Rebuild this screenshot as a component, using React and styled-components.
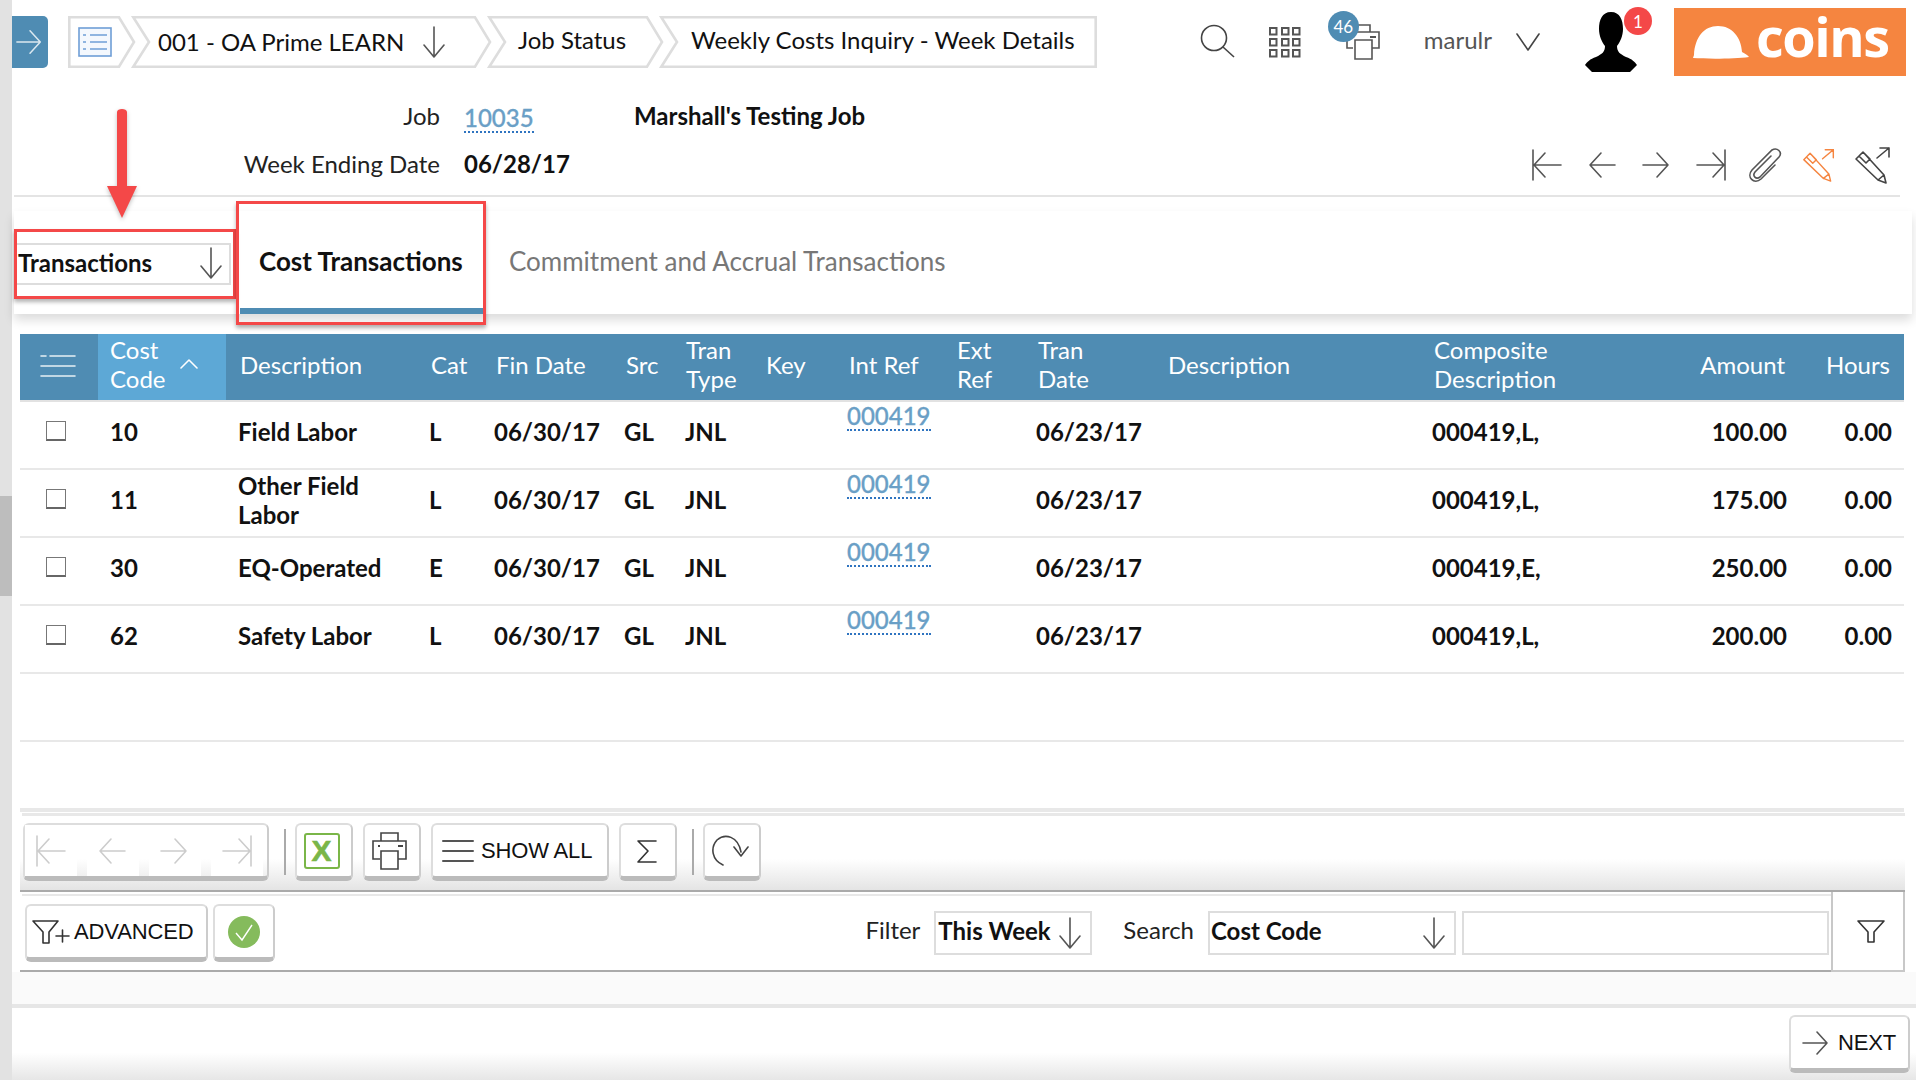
import React from "react";
import styled, { createGlobalStyle } from "styled-components";

const Global = createGlobalStyle`
  html, body { margin: 0; padding: 0; background: #fff; }
  body { font-family: Lato, "Noto Sans", sans-serif; font-size: 24px; color: #111; width: 1916px; height: 1092px; overflow: hidden; }
  * { box-sizing: border-box; }
`;

const Root = styled.div`position: relative; display: flex; width: 1916px; height: 1080px;`;
const Strip = styled.div`width: 12px; flex: none; background: #e2e2e2; padding-top: 496px;`;
const Thumb = styled.div`height: 100px; background: #bdbdbd;`;
const Main = styled.div`flex: 1; min-width: 0; display: flex; flex-direction: column;`;

/* ---------- top bar ---------- */
const TopBar = styled.header`height: 84px; flex: none; display: flex; align-items: center; padding-right: 10px;`;
const NavToggle = styled.div`width: 36px; height: 52px; background: #4f8cb3; border-radius: 0 5px 5px 0; display: flex; align-items: center; justify-content: center; margin-right: 20px;`;
const Breadcrumb = styled.nav`display: flex; height: 52px;`;
const CrumbBox = styled.div`position: relative; height: 52px; width: ${p => p.$w}px; margin-left: ${p => p.$ml || 0}px; padding-left: ${p => p.$pl}px; display: flex; align-items: center; color: #111; white-space: nowrap;`;
const CrumbShape = styled.svg`position: absolute; left: 0; top: 0; overflow: visible;`;
const CrumbLabel = styled.span`position: relative; display: flex; flex: none; margin-top: ${p => p.$mt || 0}px;`;
const CrumbArrow = styled.span`position: relative; display: flex; margin-left: 18px;`;
const TopIcons = styled.div`margin-left: auto; display: flex; align-items: center; height: 84px;`;
const IconSlot = styled.div`position: relative; display: flex; margin-left: ${p => p.$ml || 0}px; margin-top: ${p => p.$mt || 0}px;`;
const CountBadge = styled.span`position: absolute; left: ${p => p.$l}px; top: ${p => p.$t}px; width: ${p => p.$s}px; height: ${p => p.$s}px; border-radius: 50%; background: ${p => p.$bg}; color: #fff; font-size: ${p => p.$fs}px; display: flex; align-items: center; justify-content: center;`;
const UserName = styled.span`margin-left: 43px; margin-top: -5px; color: #555; font-size: 24px;`;
const Logo = styled.div`width: 232px; height: 68px; margin-left: 36px; background: #f58540; display: flex; align-items: center; padding-left: 18px; color: #fff; font-family: "Open Sans", sans-serif; font-weight: 700; font-size: 54px; line-height: 1; letter-spacing: -1.5px;`;
const LogoWord = styled.span`margin-left: 6px; margin-top: -12px;`;

/* ---------- job form ---------- */
const FormSection = styled.section`height: 113px; flex: none; display: flex; justify-content: space-between; align-items: flex-end; margin: 0 16px 0 2px; padding: 7px 0 11px 0; border-bottom: 2px solid #e4e4e4;`;
const FormGrid = styled.div`display: grid; grid-template-columns: 426px 146px auto; column-gap: 24px; grid-auto-rows: 48px; align-items: center; align-self: flex-start;`;
const FieldLabel = styled.span`text-align: right; color: #222;`;
const LinkText = styled.a`color: #6a9fc6; font-weight: 500; -webkit-text-stroke: .3px #6a9fc6; border-bottom: 2px dotted #2f74c0; line-height: 26px; width: fit-content;`;
const FormLink = styled(LinkText)`margin-top: 7px;`;
const BoldValue = styled.span`font-weight: 700; color: #111;`;
const RecordNav = styled.div`display: flex; align-items: center;`;
const RecordSlot = styled.div`width: 54px; display: flex; justify-content: center; margin-left: ${p => p.$ml || 0}px;`;

/* ---------- tabs ---------- */
const TabPanel = styled.section`height: 103px; flex: none; margin: 14px 4px 0 2px; background: #fff; display: flex; box-shadow: 0 6px 10px rgba(0,0,0,.14);`;
const SelectWrap = styled.div`width: 222px; padding-top: 32px; flex: none;`;
const TabSelect = styled.div`width: 217px; height: 42px; border: 2px solid #ddd; border-left: none; display: flex; align-items: center; justify-content: space-between; padding: 0 6px 3px 4px; font-weight: 700;`;
const Tab = styled.div`display: flex; align-items: center; height: 103px; padding: 3px 22px 0 ${p => p.$pl}px; margin-left: ${p => p.$ml || 0}px; width: ${p => p.$w ? p.$w + "px" : "auto"}; font-size: 26px; font-weight: ${p => p.$active ? 700 : 400}; color: ${p => p.$active ? "#111" : "#777"}; border-bottom: 6px solid ${p => p.$active ? "#4f8cb3" : "transparent"}; white-space: nowrap;`;

/* ---------- table ---------- */
const COLS = "78px 128px 191px 65px 130px 61px 81px 81px 110px 79px 132px 264px 180px 198px 106px";
const Table = styled.section`margin: 20px 0 0 8px; width: 1884px; flex: none;`;
const HeaderRow = styled.div`display: grid; grid-template-columns: ${COLS}; height: 68px; background: #4f8cb3; border-bottom: 2px solid #e2e2e2; color: #fff; line-height: 29px;`;
const HeadCell = styled.div`display: flex; align-items: center; padding: 0 ${p => p.$pr ?? 0}px ${p => p.$pb ?? 6}px ${p => p.$pl ?? 14}px; justify-content: ${p => p.$right ? "flex-end" : "flex-start"}; background: ${p => p.$sorted ? "#5da8d6" : "transparent"}; gap: 14px;`;
const Row = styled.div`display: grid; grid-template-columns: ${COLS}; height: ${p => p.$last ? 70 : 68}px; border-bottom: ${p => p.$last ? 4 : 2}px solid #e8e8e8; line-height: 29px; background: #fff;`;
const Cell = styled.div`display: flex; align-items: center; font-weight: 700; color: #111; padding: 0 ${p => p.$pr ?? 0}px 7px ${p => p.$pl ?? 12}px; justify-content: ${p => p.$right ? "flex-end" : "flex-start"};`;
const RefCell = styled(Cell)`align-items: flex-start; padding-top: 1px; font-weight: 400;`;
const Check = styled.div`width: 20px; height: 20px; margin: -1px 0 0 14px; border: 1px solid #777; border-bottom: 2px solid #666; background: #fff;`;

/* ---------- toolbars ---------- */
const Toolbar = styled.section`margin-left: 8px; width: 1885px; height: 80px; flex: none; border-bottom: 2px solid #aaa; background: linear-gradient(#fff 60%, #e4e4e4 100%);`;
const Rule = styled.div`height: 3px; margin: 1px 0 0 2px; background: #e8e8e8;`;
const ToolRow = styled.div`display: flex; align-items: center; gap: 10px; padding: 7px 0 0 3px;`;
const Btn = styled.div`height: 58px; width: ${p => p.$w}px; margin-left: ${p => p.$ml || 0}px; flex: none; background: ${p => p.$clear ? "transparent" : "#fff"}; border: 2px solid #ddd; border-bottom: 5px solid #bbb; border-right-color: #ccc; border-radius: 6px; display: flex; align-items: center; justify-content: ${p => p.$start ? "flex-start" : "center"}; padding: 0 ${p => p.$pr || 0}px 0 ${p => p.$pl || 0}px; gap: ${p => p.$gap || 0}px; font-family: "Liberation Sans", Arial, sans-serif; font-size: 22px; letter-spacing: -.15px; color: #111;`;
const NavCell = styled.div`flex: 1; height: 100%; display: flex; align-items: center; justify-content: center; background: #fff; margin-right: 10px; &:last-child { margin-right: 0; }`;
const Sep = styled.div`width: 2px; height: 46px; background: #aaa; margin: 0 -1px 0 5px;`;
const ExcelBox = styled.div`width: 36px; height: 36px; border: 2px solid #7ab648; border-radius: 3px; color: #7ab648; display: flex; align-items: center; justify-content: center; font-family: "Liberation Sans", Arial, sans-serif; font-weight: 700; font-size: 30px; -webkit-text-stroke: .6px #7ab648;`;

const FilterSection = styled.section`margin-left: 8px; width: 1885px; height: 80px; flex: none; display: flex;`;
const FilterBody = styled.div`width: 1811px; flex: none; border-bottom: 2px solid #aaa;`;
const FilterRule = styled.div`height: 2px; margin: 2px 0 0 2px; background: #e8e8e8;`;
const FilterRow = styled.div`display: flex; align-items: center; height: 74px; padding: 0 2px 0 5px;`;
const FilterSpacer = styled.div`flex: 1;`;
const InlineLabel = styled.span`color: #222; margin-right: ${p => p.$mr}px; margin-top: -8px;`;
const Select = styled.div`width: ${p => p.$w}px; height: 44px; margin-right: ${p => p.$mr}px; border: 2px solid #ddd; display: flex; align-items: center; justify-content: space-between; padding: 0 8px 5px ${p => p.$pl ?? 2}px; font-weight: 700;`;
const SelectArrow = styled.span`display: flex; margin-top: 5px;`;
const TextBox = styled.div`width: 367px; height: 44px; border: 2px solid #ddd;`;
const FilterCell = styled.div`flex: 1; border: 2px solid #c8c8c8; border-top: none; display: flex; align-items: center; justify-content: center; padding-left: 6px;`;

const Band = styled.div`height: 32px; flex: none; background: #fafafa;`;
const BandLine = styled.div`height: 4px; flex: none; background: #e6e6e6;`;
const Footer = styled.footer`flex: 1; background: linear-gradient(#fff 62%, #e6e6e6 100%); display: flex; justify-content: flex-end; padding: 7px 6px 0 0;`;

/* ---------- annotations ---------- */
const RedBox = styled.div`position: absolute; left: ${p => p.$l}px; top: ${p => p.$t}px; width: ${p => p.$w}px; height: ${p => p.$h}px; border: 3px solid #f44848; box-shadow: 0 3px 4px rgba(0,0,0,.3); pointer-events: none;`;
const RedArrow = styled.svg`position: absolute; left: 105px; top: 108px; filter: drop-shadow(0 2px 2px rgba(0,0,0,.25));`;

/* ---------- icons ---------- */
const Line = ({ w = 28, h = 28, vb = "0 0 28 28", c = "#555", sw = 1.6, d }) => (
  <svg width={w} height={h} viewBox={vb} fill="none" stroke={c} strokeWidth={sw} strokeLinecap="round" strokeLinejoin="round"><path d={d} /></svg>
);
const ArrowDown = ({ h = 32 }) => <Line w={24} h={h} vb="0 0 24 32" d="M12 1V31M2 19L12 31L22 19" c="#555" />;
const D = {
  first: "M2 1V31M30 16H3M14 4L3 16L14 28",
  prev: "M28 16H3M14 4L3 16L14 28",
  next: "M2 16H27M16 4L27 16L16 28",
  last: "M30 1V31M2 16H29M18 4L29 16L18 28",
};
const Nav = ({ k, c = "#555", s = 32 }) => <Line w={s} h={s} vb="0 0 32 32" c={c} d={D[k]} />;
const Pencil = ({ c, s = 38 }) => (
  <Line w={s} h={s} vb="0 0 38 38" c={c} d="M2 13L9 6L30 29L32 37L24 34ZM5 10L12 17L16 13M9 6L16 13M24 34L30 29M23 12L35 2M26 2H35V11" />
);

const CRUMB_H = 52;
const crumbPath = (w, first, last) => {
  const i = 1.3, b = CRUMB_H - 1.3, m = CRUMB_H / 2;
  const left = `M1.3 ${i}`;
  const leftBack = first ? `L1.3 ${b}Z` : `L1.3 ${b}L17 ${m}Z`;
  if (last) return `${left}L${w - 1.3} ${i}L${w - 1.3} ${b}${leftBack}`;
  return `${left}L${w - 16} ${i}L${w - 1} ${m}L${w - 16} ${b}${leftBack}`;
};
const Crumb = ({ w, ml, pl, first, last, children }) => (
  <CrumbBox $w={w} $ml={ml} $pl={pl}>
    <CrumbShape width={w} height={CRUMB_H} viewBox={`0 0 ${w} ${CRUMB_H}`} fill="#fff" stroke="#ddd" strokeWidth="2.6"><path d={crumbPath(w, first, last)} /></CrumbShape>
    {children}
  </CrumbBox>
);

const headers = [
  ["Description", 14], ["Cat", 14], ["Fin Date", 14], ["Src", 14], ["Tran\nType", 13], ["Key", 12], ["Int Ref", 14], ["Ext\nRef", 12], ["Tran\nDate", 14], ["Description", 12], ["Composite\nDescription", 14],
];
const rows = [
  ["10", "Field Labor", "L", "000419,L,", "100.00"],
  ["11", "Other Field Labor", "L", "000419,L,", "175.00"],
  ["30", "EQ-Operated", "E", "000419,E,", "250.00"],
  ["62", "Safety Labor", "L", "000419,L,", "200.00"],
];
const Multi = ({ t }) => <span>{t.split("\n").map((s, i) => <React.Fragment key={i}>{i > 0 && <br />}{s}</React.Fragment>)}</span>;

export default function App() {
  return (
    <>
      <Global />
      <Root>
        <Strip><Thumb /></Strip>
        <Main>
          <TopBar>
            <NavToggle><Line w={30} h={30} vb="0 0 32 32" c="#dbe8f0" d={D.next} /></NavToggle>
            <Breadcrumb>
              <Crumb w={67} pl={10} first>
                <CrumbLabel>
                  <svg width="34" height="30" viewBox="0 0 34 30" fill="#fff" stroke="#6f9ed6" strokeWidth="1.6"><rect x="1" y="1" width="32" height="28" fill="#f4f8fd" /><path d="M5 8H8M12 8H29M5 15H8M12 15H29M5 22H8M12 22H29" /></svg>
                </CrumbLabel>
              </Crumb>
              <Crumb w={359} ml={-3} pl={26}>
                <CrumbLabel $mt={-2}>001 - OA Prime LEARN</CrumbLabel><CrumbArrow><ArrowDown /></CrumbArrow>
              </Crumb>
              <Crumb w={175} ml={-3} pl={30}><CrumbLabel $mt={-5}>Job Status</CrumbLabel></Crumb>
              <Crumb w={437} ml={-3} pl={31} last><CrumbLabel $mt={-5}>Weekly Costs Inquiry - Week Details</CrumbLabel></Crumb>
            </Breadcrumb>
            <TopIcons>
              <IconSlot $mt={-2}>
                <svg width="36" height="34" viewBox="0 0 36 34" fill="none" stroke="#444" strokeWidth="1.6"><ellipse cx="14" cy="14" rx="12.5" ry="12.5" /><path d="M23 23L34 33" /></svg>
              </IconSlot>
              <IconSlot $ml={33}>
                <svg width="32" height="32" viewBox="0 0 32 32" fill="none" stroke="#555" strokeWidth="2">
                  {[2, 13, 24].map(y => [1, 13, 24].map(x => <rect key={`${x}-${y}`} x={x} y={y} width="6.5" height="6.5" />))}
                </svg>
              </IconSlot>
              <IconSlot $ml={44}>
                <svg width="36" height="36" viewBox="0 0 36 36" fill="none" stroke="#555" strokeWidth="1.6"><path d="M10 8V1H25V8M8 24H2V8H34V24H27M10 16H27V35H10Z" /><path d="M25 13H31" strokeWidth="2" /></svg>
                <CountBadge $l={-17} $t={-13} $s={31} $bg="#4f8cb3" $fs={17}>46</CountBadge>
              </IconSlot>
              <UserName>marulr</UserName>
              <IconSlot $ml={24}><Line w={24} h={18} vb="0 0 24 18" d="M1 1L12 17L23 1" c="#444" /></IconSlot>
              <IconSlot $ml={44}>
                <svg width="54" height="60" viewBox="0 0 54 60" fill="#000"><path d="M27 0C18 0 15 8 15 17C15 24 18 30 21 34C21 40 18 42 12 45C6 47 3 50 1 53L8 60H46L53 53C51 50 48 47 42 45C36 42 33 40 33 34C36 30 39 24 39 17C39 8 36 0 27 0Z" /></svg>
                <CountBadge $l={40} $t={-5} $s={28} $bg="#f44848" $fs={17}>1</CountBadge>
              </IconSlot>
              <Logo>
                <svg width="58" height="34" viewBox="0 0 58 34" fill="#fff"><path d="M2 30C3 12 12 1 26 1C40 1 49 12 50 27C53 29 56 30 57 32C42 34 15 34 1 33Z" /></svg>
                <LogoWord>coins</LogoWord>
              </Logo>
            </TopIcons>
          </TopBar>

          <FormSection>
            <FormGrid>
              <FieldLabel>Job</FieldLabel><FormLink>10035</FormLink><BoldValue>Marshall's Testing Job</BoldValue>
              <FieldLabel>Week Ending Date</FieldLabel><BoldValue>06/28/17</BoldValue><span />
            </FormGrid>
            <RecordNav>
              <RecordSlot><Nav k="first" /></RecordSlot>
              <RecordSlot $ml={2}><Nav k="prev" /></RecordSlot>
              <RecordSlot><Nav k="next" /></RecordSlot>
              <RecordSlot><Nav k="last" /></RecordSlot>
              <RecordSlot>
                <svg width="38" height="36" viewBox="0 0 36 36" fill="none" stroke="#555" strokeWidth="1.6" strokeLinecap="round"><path d="M24 9L8 25C5 29 9 33 13 30L32 10C36 5 30 0 25 3L5 23C-1 30 7 38 14 32L28 18" /></svg>
              </RecordSlot>
              <RecordSlot><Pencil c="#f58540" s={34} /></RecordSlot>
              <RecordSlot><Pencil c="#444" /></RecordSlot>
            </RecordNav>
          </FormSection>

          <TabPanel>
            <SelectWrap><TabSelect>Transactions<ArrowDown /></TabSelect></SelectWrap>
            <Tab $active $ml={4} $pl={19} $w={243}>Cost Transactions</Tab>
            <Tab $pl={26}>Commitment and Accrual Transactions</Tab>
          </TabPanel>

          <Table>
            <HeaderRow>
              <HeadCell $pl={20} $pb={2}><Line w={36} h={24} vb="0 0 36 24" c="#e6eff5" d="M1 2H6M10 2H35M1 12H35M1 22H35" /></HeadCell>
              <HeadCell $sorted $pl={12}><Multi t={"Cost\nCode"} /><Line w={18} h={12} vb="0 0 18 12" c="#fff" d="M1 10L9 2L17 10" /></HeadCell>
              {headers.map(([t, pl], i) => <HeadCell key={i} $pl={pl}><Multi t={t} /></HeadCell>)}
              <HeadCell $right $pr={13} $pl={0}>Amount</HeadCell>
              <HeadCell $right $pr={14} $pl={0}>Hours</HeadCell>
            </HeaderRow>
            {rows.map(r => (
              <Row key={r[0]}>
                <Cell $pl={12}><Check /></Cell>
                <Cell>{r[0]}</Cell>
                <Cell>{r[1]}</Cell>
                <Cell>{r[2]}</Cell>
                <Cell>06/30/17</Cell>
                <Cell>GL</Cell>
                <Cell>JNL</Cell>
                <Cell />
                <RefCell><LinkText>000419</LinkText></RefCell>
                <Cell />
                <Cell>06/23/17</Cell>
                <Cell />
                <Cell>{r[3]}</Cell>
                <Cell $right $pr={11} $pl={0}>{r[4]}</Cell>
                <Cell $right $pr={12} $pl={0}>0.00</Cell>
              </Row>
            ))}
            <Row />
            <Row $last />
          </Table>

          <Toolbar>
            <Rule />
            <ToolRow>
              <Btn $w={246} $clear $pr={4}>
                {["first", "prev", "next", "last"].map(k => <NavCell key={k}><Nav k={k} c="#ccc" /></NavCell>)}
              </Btn>
              <Sep />
              <Btn $w={58} $pr={5}><ExcelBox>X</ExcelBox></Btn>
              <Btn $w={58} $pr={6}>
                <svg width="36" height="38" viewBox="0 0 36 38" fill="none" stroke="#444" strokeWidth="1.6"><path d="M10 9V1H27V9M9 27H2V9H35V27H27M10 19H27V37H10Z" /><path d="M7 14H9M27 14H32" strokeWidth="2" /></svg>
              </Btn>
              <Btn $w={178} $start $pl={9} $gap={7}>
                <Line w={32} h={24} vb="0 0 32 24" c="#555" sw={2} d="M1 2H31M1 12H31M1 22H31" />SHOW ALL
              </Btn>
              <Btn $w={58} $pr={3}><Line w={22} h={24} vb="0 0 22 24" c="#333" d="M20 2H2L12 12L2 23H20" /></Btn>
              <Sep />
              <Btn $w={58} $pr={4}><Line w={40} h={34} vb="0 0 40 34" c="#444" d="M13 31C2 26 0 14 7 6C15 -1 28 2 31 18M24 13L31 22L38 13" /></Btn>
            </ToolRow>
          </Toolbar>

          <FilterSection>
            <FilterBody>
              <FilterRule />
              <FilterRow>
                <Btn $w={183} $start $pl={5} $gap={2}>
                  <Line w={40} h={24} vb="0 0 40 24" c="#333" d="M1 1H26L17 12V23H11V12ZM24 16H37M30.5 10V22" />ADVANCED
                </Btn>
                <Btn $w={62} $ml={5}>
                  <svg width="32" height="32" viewBox="0 0 32 32"><circle cx="16" cy="16" r="16" fill="#85bb5c" /><path d="M8 17L14 24L24 9" fill="none" stroke="#fff" strokeWidth="1.4" /></svg>
                </Btn>
                <FilterSpacer />
                <InlineLabel $mr={14}>Filter</InlineLabel>
                <Select $w={158} $mr={31}>This Week<SelectArrow><ArrowDown /></SelectArrow></Select>
                <InlineLabel $mr={14}>Search</InlineLabel>
                <Select $w={248} $mr={6} $pl={1}>Cost Code<SelectArrow><ArrowDown /></SelectArrow></Select>
                <TextBox />
              </FilterRow>
            </FilterBody>
            <FilterCell><Line w={28} h={24} vb="0 0 28 24" c="#333" d="M1 2H27L17 13V23H11V13Z" /></FilterCell>
          </FilterSection>

          <Band />
          <BandLine />
          <Footer>
            <Btn $w={121} $start $pl={11} $gap={8}>
              <Line w={28} h={24} vb="0 0 28 24" c="#555" d="M1 12H25M15 1L25 12L15 23" />NEXT
            </Btn>
          </Footer>
        </Main>

        <RedBox $l={14} $t={229} $w={222} $h={70} />
        <RedBox $l={236} $t={201} $w={250} $h={124} />
        <RedArrow width="34" height="112" viewBox="0 0 34 112">
          <path d="M12 4C12 0 22 0 22 4V78H32L17 110L2 78H12Z" fill="#f44848" />
        </RedArrow>
      </Root>
    </>
  );
}
